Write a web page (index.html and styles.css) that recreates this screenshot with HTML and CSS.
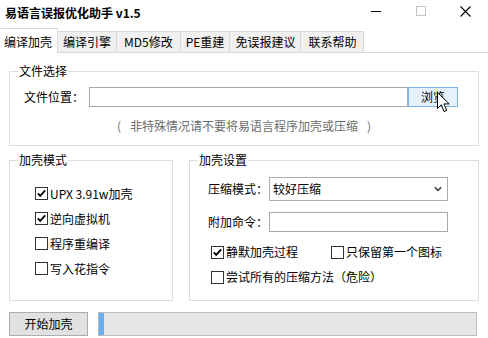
FILE: index.html
```html
<!DOCTYPE html>
<html lang="zh-CN">
<head>
<meta charset="utf-8">
<title>易语言误报优化助手 v1.5</title>
<link rel="stylesheet" href="styles.css">
</head>
<body>
<div class="window">
  <div class="titlebar">
    <span class="title">易语言误报优化助手 v1.5</span>
    <div class="controls">
      <span class="ctl"><svg width="10" height="10" viewBox="0 0 10 10"><path d="M0 5.5H10" stroke="#000" stroke-width="1"/></svg></span>
      <span class="ctl"><svg width="10" height="10" viewBox="0 0 10 10"><rect x="0.5" y="0.5" width="9" height="9" fill="none" stroke="#c4c4c4" stroke-width="1"/></svg></span>
      <span class="ctl"><svg width="11" height="11" viewBox="0 0 11 11"><path d="M0.5 0.5L10.5 10.5M10.5 0.5L0.5 10.5" stroke="#000" stroke-width="1.1"/></svg></span>
    </div>
  </div>
  <div class="tabs">
    <div class="tab active">编译加壳</div>
    <div class="tab">编译引擎</div>
    <div class="tab tab-wide">MD5修改</div>
    <div class="tab">PE重建</div>
    <div class="tab">免误报建议</div>
    <div class="tab tab-wide">联系帮助</div>
  </div>
  <div class="content">
    <fieldset class="group file-group">
      <legend>文件选择</legend>
      <div class="file-row">
        <span class="label">文件位置：</span>
        <div class="textbox file-input"></div>
        <div class="browse">浏览
          <svg class="cursor" width="14" height="21" viewBox="0 0 14 21"><path d="M0.5 0.5V16.5L4.3 12.8L7 19.5L9.6 18.4L7 11.9H12.2Z" fill="#fff" stroke="#000" stroke-width="1" stroke-linejoin="miter"/></svg>
        </div>
      </div>
      <div class="hint"><span>(</span><span>非特殊情况请不要将易语言程序加壳或压缩</span><span>)</span></div>
    </fieldset>
    <div class="row2">
      <fieldset class="group mode-group">
        <legend>加壳模式</legend>
        <div class="checklist">
          <div class="check"><span class="box"><svg width="11" height="11" viewBox="0 0 11 11"><path d="M1.8 5.4L4.2 7.9L9.2 2.4" fill="none" stroke="#000" stroke-width="1.8"/></svg></span><span>UPX 3.91w加壳</span></div>
          <div class="check"><span class="box"><svg width="11" height="11" viewBox="0 0 11 11"><path d="M1.8 5.4L4.2 7.9L9.2 2.4" fill="none" stroke="#000" stroke-width="1.8"/></svg></span><span>逆向虚拟机</span></div>
          <div class="check"><span class="box"></span><span>程序重编译</span></div>
          <div class="check"><span class="box"></span><span>写入花指令</span></div>
        </div>
      </fieldset>
      <fieldset class="group set-group">
        <legend>加壳设置</legend>
        <div class="settings">
          <div class="field">
            <span class="label label-s">压缩模式：</span>
            <div class="select"><span>较好压缩</span><svg width="8" height="6" viewBox="0 0 8 6"><path d="M0.8 1.2L4 4.4L7.2 1.2" fill="none" stroke="#444" stroke-width="1.6"/></svg></div>
          </div>
          <div class="field field-cmd">
            <span class="label label-s">附加命令：</span>
            <div class="textbox cmd-input"></div>
          </div>
          <div class="check-row">
            <div class="check check-wide"><span class="box"><svg width="11" height="11" viewBox="0 0 11 11"><path d="M1.8 5.4L4.2 7.9L9.2 2.4" fill="none" stroke="#000" stroke-width="1.8"/></svg></span><span>静默加壳过程</span></div>
            <div class="check"><span class="box"></span><span>只保留第一个图标</span></div>
          </div>
          <div class="check-row check-row2">
            <div class="check"><span class="box"></span><span>尝试所有的压缩方法（危险）</span></div>
          </div>
        </div>
      </fieldset>
    </div>
    <div class="bottom">
      <div class="start-btn">开始加壳</div>
      <div class="progress"><div class="fill" style="width:5px"></div></div>
    </div>
  </div>
</div>
</body>
</html>
```
FILE: styles.css
```css
* { box-sizing: border-box; }
html, body { margin: 0; padding: 0; background: #fff; }
body {
  font-family: "Noto Sans CJK SC", "Noto Sans", sans-serif;
  font-size: 12px;
  color: #000;
  line-height: 16px;
}
.window { width: 488px; height: 338px; overflow: hidden; background: #fff; }

.titlebar { height: 28px; display: flex; align-items: flex-start; padding-left: 5px; }
.title { flex: 1; font-weight: bold; line-height: 16px; margin-top: 5px; }
.controls { display: flex; }
.ctl { width: 45px; height: 22px; display: flex; align-items: center; justify-content: center; }

.tabs { display: flex; align-items: flex-end; height: 25px; border-bottom: 1px solid #d9d9d9; }
.tab {
  height: 21px; border: 1px solid #d9d9d9; border-bottom: none; background: #f0f0f0;
  margin-left: -1px; padding: 0 5px; line-height: 19px; white-space: nowrap;
}
.tab-wide { padding: 0 7px; }
.tab.active {
  height: 25px; margin-left: 0; margin-bottom: -1px; background: #fff;
  padding: 3px 5px 0 3px; position: relative; z-index: 1; border-left-color: #fff;
}

.content { padding: 0 9px; }
.group { margin: 0; border: 1px solid #dcdcdc; padding: 0 0 0 8px; min-width: 0; }
.group legend { padding: 0 1px; line-height: 16px; }

.file-group { margin-top: 10px; padding-bottom: 11px; }
.file-row { display: flex; align-items: center; padding: 8px 20px 0 6px; height: 28px; }
.label { margin-right: 5px; white-space: nowrap; }
.textbox { height: 20px; border: 1px solid #a9a9a9; background: #fff; }
.file-input { flex: 1; }
.browse {
  width: 50px; height: 20px; border: 1px solid #7eb4ea; background: #e5f1fb;
  text-align: center; line-height: 18px; position: relative;
}
.cursor { position: absolute; left: 28px; top: 4px; }
.hint {
  display: flex; justify-content: center; gap: 9px; margin-top: 11px; padding-right: 8px;
  color: #6d6d6d; line-height: 16px;
}

.row2 { display: flex; gap: 16px; margin-top: 6px; height: 149px; }
.mode-group { width: 164px; }
.set-group { flex: 1; }
.checklist { padding: 13px 0 0 17px; }
.check { display: flex; align-items: center; height: 25px; white-space: nowrap; }
.box {
  width: 13px; height: 13px; border: 1px solid #333; background: #fff; margin-right: 2px;
  display: flex; align-items: center; justify-content: center; flex: none;
}

.settings { padding: 9px 0 0 10px; }
.field { display: flex; align-items: center; }
.label-s { width: 61px; margin-right: 0; }
.select {
  width: 179px; height: 24px; border: 1px solid #acacac; background: #fff;
  display: flex; align-items: center; justify-content: space-between; padding: 0 5px 0 3px;
}
.field-cmd { margin-top: 11px; }
.cmd-input { width: 179px; }
.check-row { display: flex; margin-top: 10px; padding-left: 3px; }
.check-row .check { height: 20px; }
.check-row2 { margin-top: 5px; }
.check-wide { width: 120px; }

.bottom { display: flex; margin-top: 11px; height: 24px; }
.start-btn {
  width: 79px; height: 24px; border: 1px solid #adadad; background: #e1e1e1;
  text-align: center; line-height: 22px; margin-right: 10px;
}
.progress { flex: 1; margin-right: 2px; border: 1px solid #bcbcbc; background: #e6e6e6; padding: 0; }
.fill { height: 100%; background: #6aaef0; }
```
